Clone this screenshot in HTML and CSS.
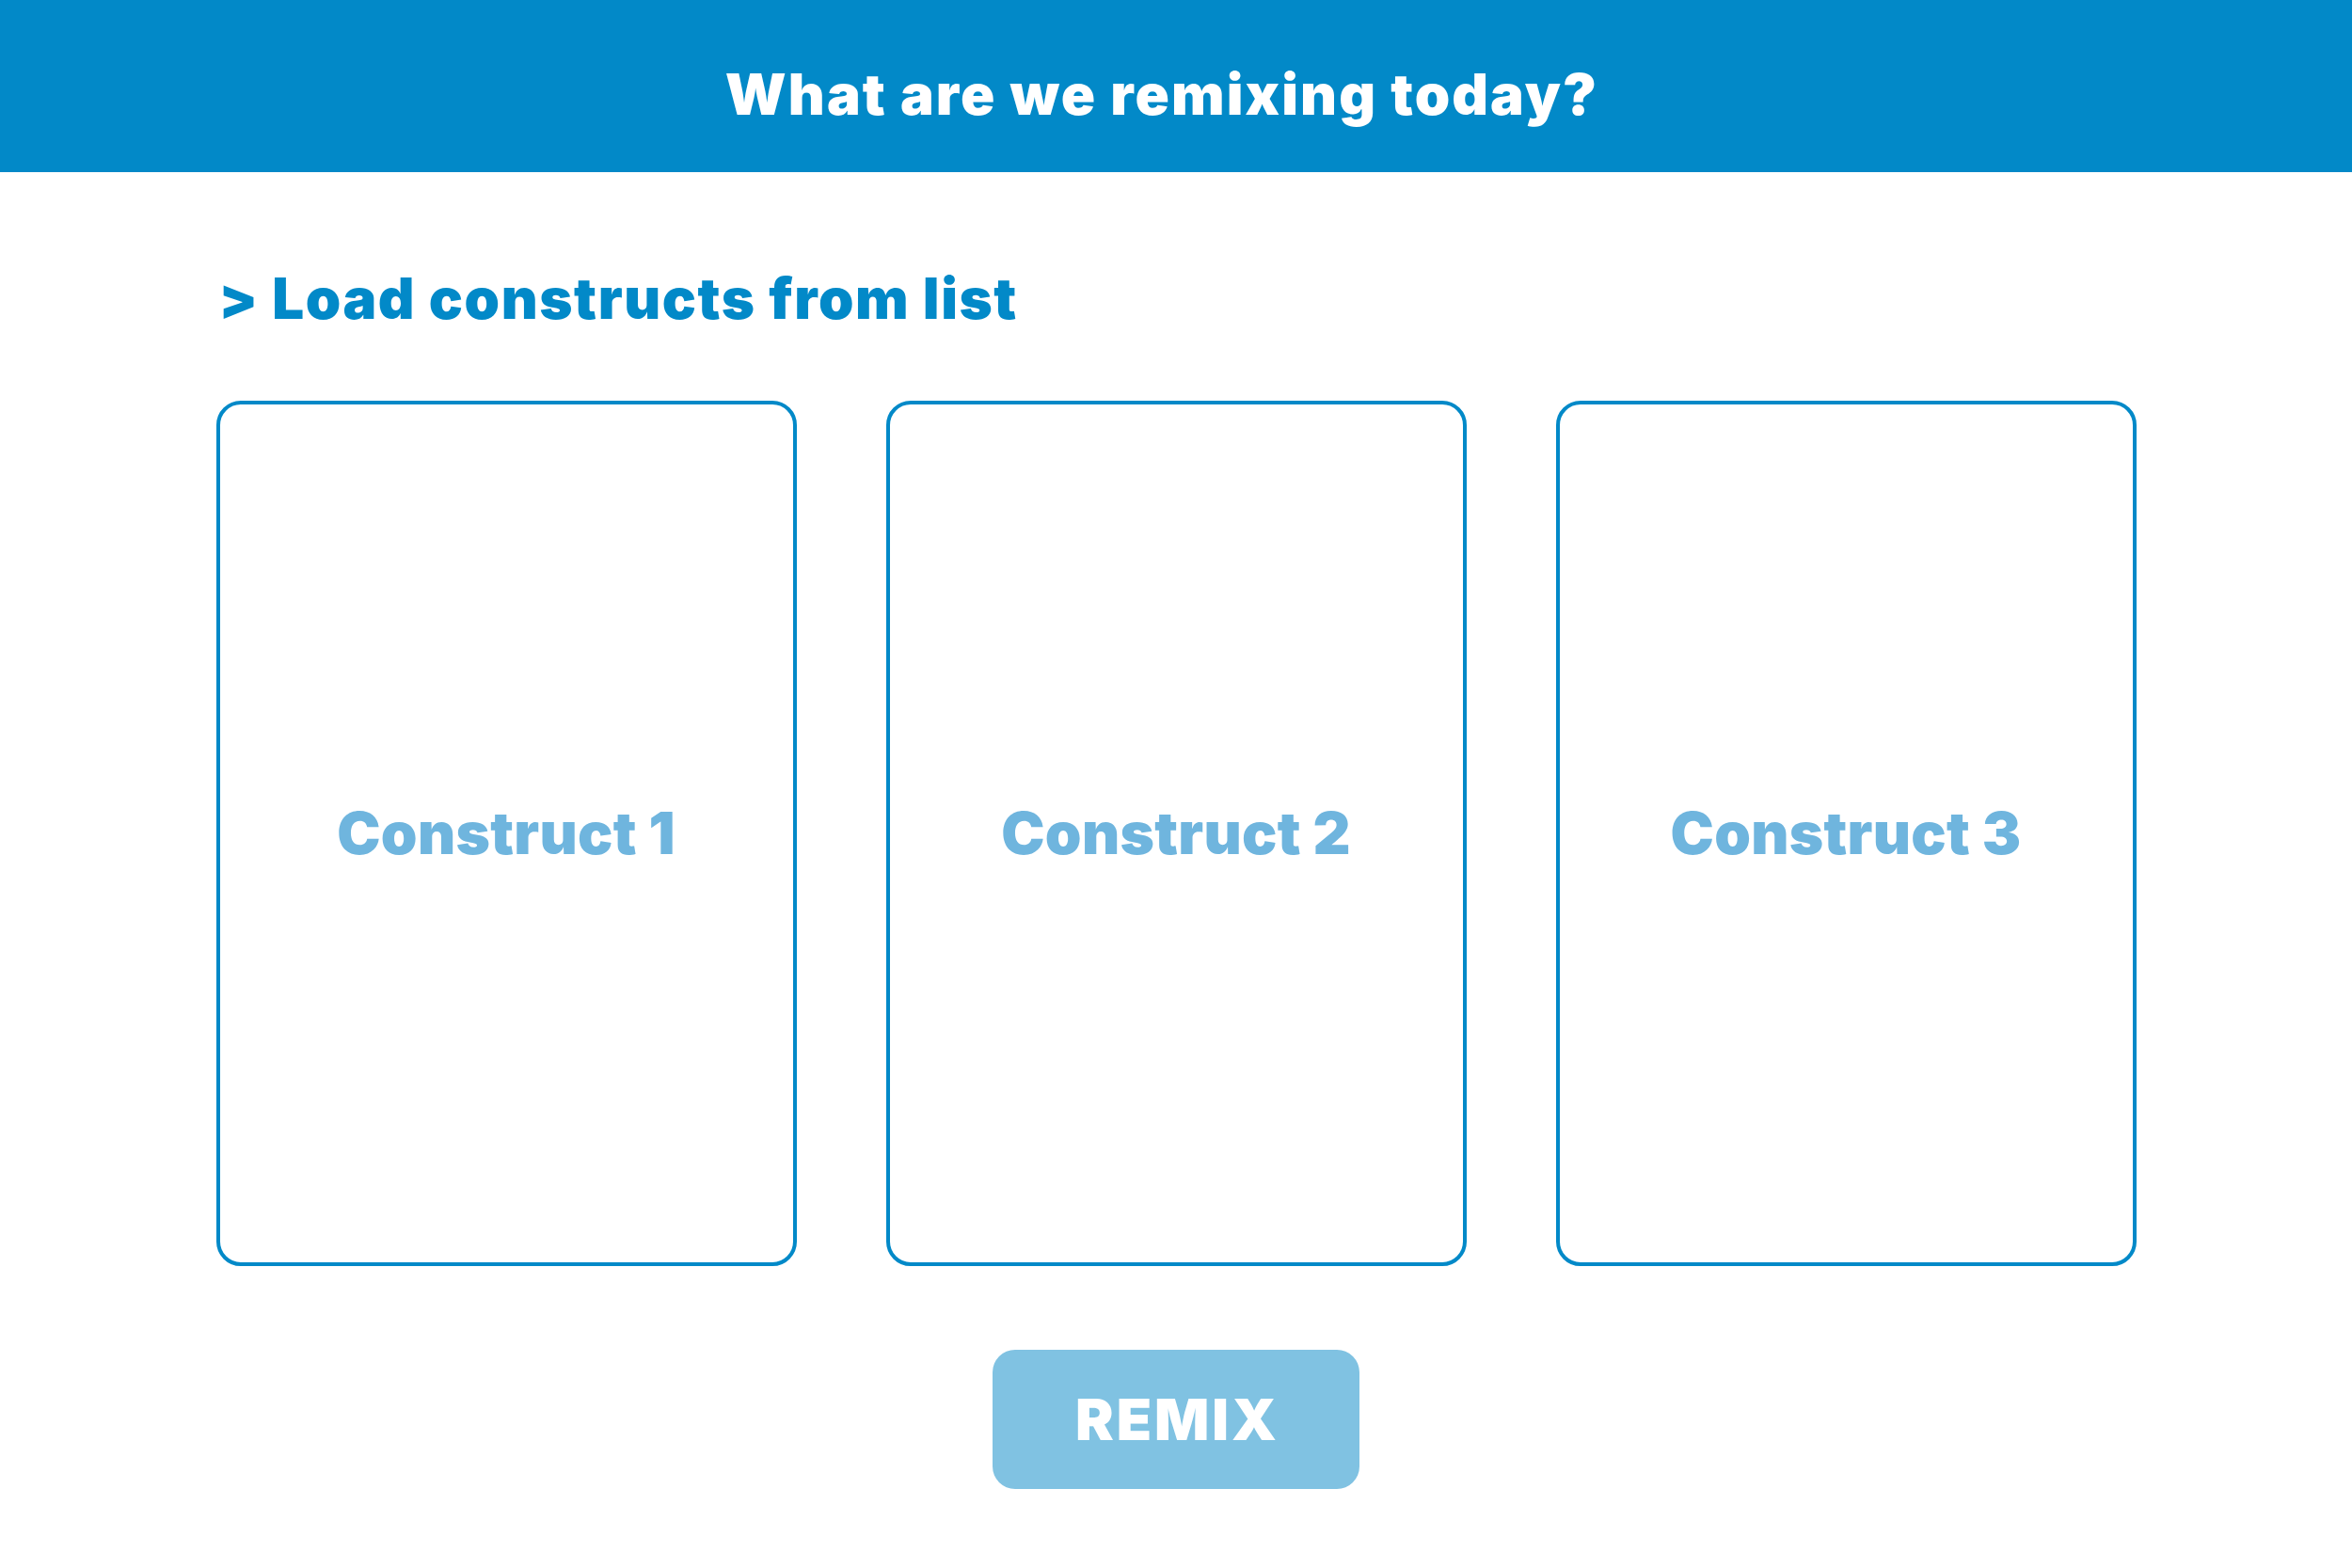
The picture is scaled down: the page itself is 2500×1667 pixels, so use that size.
FILE: index.html
```html
<!DOCTYPE html>
<html lang="en">
<head>
<meta charset="utf-8">
<title>Remix</title>
<link rel="stylesheet" href="styles.css">
</head>
<body>
<header class="topbar">
  <h1 class="topbar-title">What are we remixing today?</h1>
</header>
<main class="content">
  <h2 class="section-title">&gt; Load constructs from list</h2>
  <div class="cards">
    <div class="card"><span class="card-label">Construct 1</span></div>
    <div class="card"><span class="card-label">Construct 2</span></div>
    <div class="card"><span class="card-label">Construct 3</span></div>
  </div>
  <div class="actions">
    <button class="remix-btn" type="button">REMIX</button>
  </div>
</main>
</body>
</html>
```
FILE: styles.css
```css
* { box-sizing: border-box; }
html, body { margin: 0; padding: 0; background: #ffffff; }
body { font-family: Inter, "Liberation Sans", Arial, sans-serif; }

.topbar {
  height: 183px;
  background: #0289c8;
  padding-top: 70px;
  padding-right: 30px;
  display: flex;
  justify-content: center;
}
.topbar-title {
  margin: 0;
  font-size: 60px;
  line-height: 1;
  font-weight: 900;
  letter-spacing: 2.1px;
  color: #ffffff;
}

.content {
  width: 2041px;
  margin: 0 auto;
}
.section-title {
  margin: 104px 0 0 3px;
  font-size: 60px;
  line-height: 1;
  font-weight: 900;
  letter-spacing: 1.6px;
  color: #0289c8;
}

.cards {
  margin-top: 79px;
  display: grid;
  grid-template-columns: repeat(3, 617px);
  justify-content: space-between;
}
.card {
  height: 920px;
  border: 4px solid #0289c8;
  border-radius: 26px;
  display: flex;
  align-items: center;
  justify-content: center;
}
.card-label {
  font-size: 62px;
  line-height: 1;
  font-weight: 900;
  letter-spacing: 0.3px;
  color: #6fb5de;
}

.actions {
  margin-top: 89px;
  display: flex;
  justify-content: center;
}
.remix-btn {
  width: 390px;
  height: 148px;
  border: none;
  border-radius: 24px;
  background: #80c2e2;
  color: #ffffff;
  font-family: Inter, "Liberation Sans", Arial, sans-serif;
  font-size: 61px;
  font-weight: 900;
  letter-spacing: 3px;
  line-height: 1;
  padding: 0 0 0 3px;
}
```
